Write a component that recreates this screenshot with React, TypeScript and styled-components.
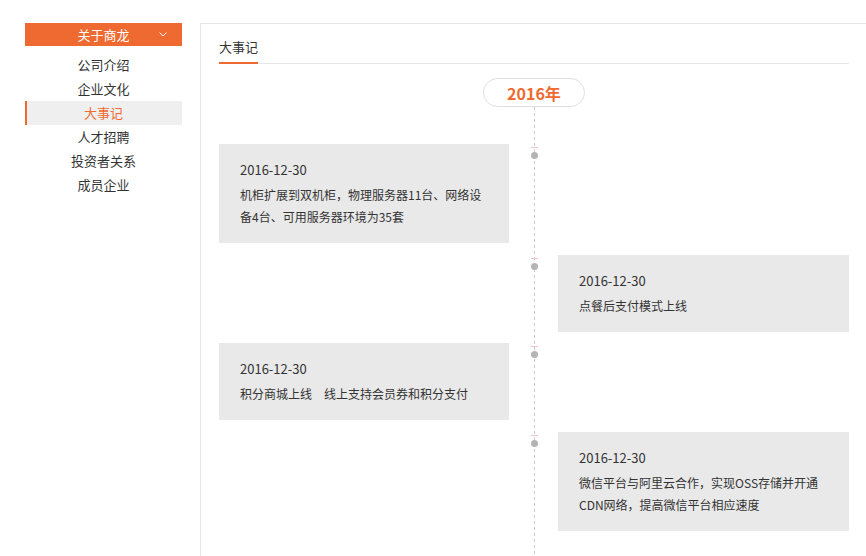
import React from "react";
import styled, { createGlobalStyle } from "styled-components";

const ORANGE = "#ef6a30";

const Global = createGlobalStyle`
  html, body { margin: 0; padding: 0; background: #fff; overflow: hidden; }
  body { font-family: "Noto Sans CJK SC", "Microsoft YaHei", sans-serif; color: #333; }
  * { box-sizing: border-box; }
`;

const Page = styled.div`
  display: flex;
  align-items: flex-start;
  gap: 18px;
  padding: 23px 0 0 25px;
  width: 900px;
`;

const Sidebar = styled.aside`
  width: 157px;
  flex: 0 0 157px;
`;

const SideHeader = styled.div`
  position: relative;
  height: 23px;
  background: ${ORANGE};
  color: #fff;
  font-size: 13px;
  display: flex;
  align-items: center;
  justify-content: center;
`;

const Chevron = styled.svg`
  position: absolute;
  right: 15px;
  top: 9px;
`;

const Menu = styled.ul`
  list-style: none;
  margin: 0;
  padding: 7px 0 0;
`;

const MenuItem = styled.li<{ $active?: boolean }>`
  height: 24px;
  line-height: 24px;
  font-size: 13px;
  text-align: center;
  color: ${(p) => (p.$active ? ORANGE : "#333")};
  background: ${(p) => (p.$active ? "#efefef" : "transparent")};
  border-left: 2px solid ${(p) => (p.$active ? ORANGE : "transparent")};
  padding-right: 2px;
`;

const Panel = styled.main`
  flex: 0 0 668px;
  width: 668px;
  min-height: 540px;
  border: 1px solid #e6e6e6;
  border-bottom: none;
  padding: 0 18px;
`;

const TabBar = styled.div`
  display: flex;
  padding-top: 13px;
  border-bottom: 1px solid #e8e8e8;
`;

const Tab = styled.div`
  font-size: 13px;
  line-height: 20px;
  color: #333;
  padding-bottom: 5px;
  border-bottom: 2px solid ${ORANGE};
  margin-bottom: -1px;
`;

const Timeline = styled.div`
  position: relative;
  padding: 14px 0 40px;

  &::before {
    content: "";
    position: absolute;
    left: 315px;
    top: 43px;
    bottom: 0;
    width: 1px;
    background: repeating-linear-gradient(to bottom, #c8c8c8 0 3px, transparent 3px 6px);
  }
`;

const YearRow = styled.div`
  display: flex;
  justify-content: center;
`;

const YearPill = styled.div`
  position: relative;
  z-index: 1;
  width: 102px;
  height: 29px;
  border: 1px solid #e0e0e0;
  border-radius: 15px;
  background: #fff;
  color: ${ORANGE};
  font-size: 16px;
  font-weight: 700;
  display: flex;
  align-items: center;
  justify-content: center;
`;

const Rows = styled.div`
  display: grid;
  grid-template-columns: 290px 49px 291px;
  row-gap: 11.5px;
  margin-top: 37px;
`;

const Axis = styled.div`
  position: relative;
  z-index: 1;
  display: flex;
  flex-direction: column;
  align-items: center;
  padding-top: 3px;
  padding-left: 1px;
`;

const Tick = styled.span`
  width: 7px;
  height: 1px;
  background: #f1c4c4;
`;

const Dot = styled.span`
  width: 7px;
  height: 7px;
  margin-top: 4px;
  border-radius: 50%;
  background: #b4b4b4;
`;

const Card = styled.div<{ $side: "left" | "right" }>`
  grid-column: ${(p) => (p.$side === "left" ? 1 : 3)};
  background: #e9e9e9;
  padding: 15px 21px 15px;
`;

const DateText = styled.div`
  font-size: 13px;
  line-height: 22px;
  color: #333;
  margin-bottom: 3px;
`;

const Desc = styled.div`
  font-size: 12px;
  line-height: 22px;
  color: #333;
`;

const Empty = styled.div``;

const events: { side: "left" | "right"; date: string; text: string }[] = [
  { side: "left", date: "2016-12-30", text: "机柜扩展到双机柜，物理服务器11台、网络设备4台、可用服务器环境为35套" },
  { side: "right", date: "2016-12-30", text: "点餐后支付模式上线" },
  { side: "left", date: "2016-12-30", text: "积分商城上线\u3000线上支持会员券和积分支付" },
  { side: "right", date: "2016-12-30", text: "微信平台与阿里云合作，实现OSS存储并开通CDN网络，提高微信平台相应速度" },
];

const menu = ["公司介绍", "企业文化", "大事记", "人才招聘", "投资者关系", "成员企业"];

export default function App() {
  return (
    <>
      <Global />
      <Page>
        <Sidebar>
          <SideHeader>
            关于商龙
            <Chevron width="8" height="5" viewBox="0 0 8 5">
              <path d="M0.5 0.5 L4 4 L7.5 0.5" fill="none" stroke="#fff" strokeWidth="1" />
            </Chevron>
          </SideHeader>
          <Menu>
            {menu.map((m) => (
              <MenuItem key={m} $active={m === "大事记"}>
                {m}
              </MenuItem>
            ))}
          </Menu>
        </Sidebar>
        <Panel>
          <TabBar>
            <Tab>大事记</Tab>
          </TabBar>
          <Timeline>
            <YearRow>
              <YearPill>2016年</YearPill>
            </YearRow>
            <Rows>
              {events.map((e, i) => (
                <React.Fragment key={i}>
                  {e.side === "right" && <Empty />}
                  {e.side === "left" && (
                    <Card $side="left">
                      <DateText>{e.date}</DateText>
                      <Desc>{e.text}</Desc>
                    </Card>
                  )}
                  <Axis>
                    <Tick />
                    <Dot />
                  </Axis>
                  {e.side === "right" ? (
                    <Card $side="right">
                      <DateText>{e.date}</DateText>
                      <Desc>{e.text}</Desc>
                    </Card>
                  ) : (
                    <Empty />
                  )}
                </React.Fragment>
              ))}
            </Rows>
          </Timeline>
        </Panel>
      </Page>
    </>
  );
}
